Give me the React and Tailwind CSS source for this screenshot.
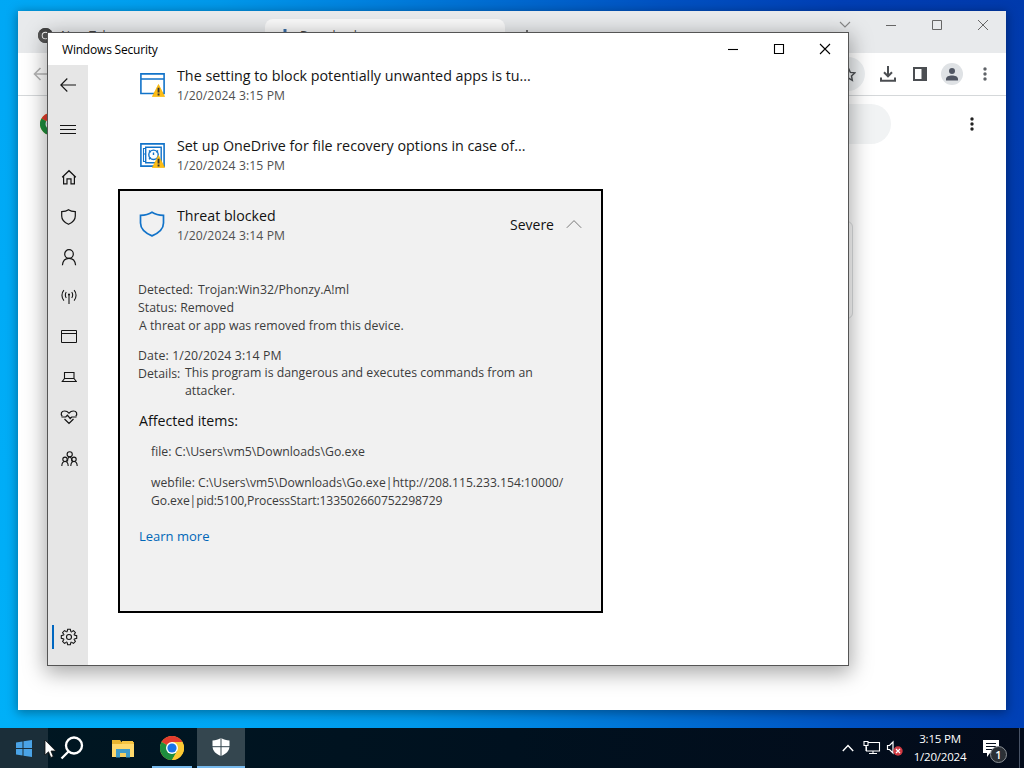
import React from "react";

const line = { fill: "none", stroke: "currentColor" };

function Svg({ w, h, className = "", children, sw = 1.1, vb }) {
  return (
    <svg width={w} height={h} viewBox={vb || `0 0 ${w} ${h}`} className={`block shrink-0 ${className}`} {...line} strokeWidth={sw}>
      {children}
    </svg>
  );
}

function NavItem({ children, className = "" }) {
  return <div className={`flex h-10 w-10 shrink-0 items-center pl-[13px] text-[#141414] ${className}`}>{children}</div>;
}

function Sidebar() {
  return (
    <nav className="flex w-10 shrink-0 flex-col bg-[#e6e6e6]">
      <NavItem>
        <Svg w={18} h={16} sw={1.1} className="-ml-[2px]"><path d="M17 8H1.800M8.300 1.500L1.800 8l6.500 6.500" /></Svg>
      </NavItem>
      <NavItem className="mt-1">
        <Svg w={18} h={12} sw={1} className="-ml-[2px]"><path d="M1 2.500h16M1 6.500h16M1 10.500h16" /></Svg>
      </NavItem>
      <NavItem className="mt-2">
        <Svg w={16} h={16} sw={1.2}><path d="M1.200 8.200L8 1.700l6.800 6.500M2.600 7v7.900h3.400v-5h4v5h3.400V7" /></Svg>
      </NavItem>
      <NavItem>
        <Svg w={15} h={16} sw={1.2}><path d="M7.500 .8C5.600 2.200 3.300 2.600.7 2.700V7c0 4 2.600 6.500 6.800 8.300C11.700 13.500 14.300 11 14.300 7V2.700C11.700 2.600 9.400 2.200 7.500 .8z" /></Svg>
      </NavItem>
      <NavItem>
        <Svg w={16} h={17} sw={1.2}><circle cx="8" cy="5" r="4.300" /><path d="M1.400 16.200C1.800 12 4.400 9.300 8 9.300s6.200 2.700 6.600 6.900" /></Svg>
      </NavItem>
      <NavItem>
        <Svg w={16} h={16}><path d="M8 5.500v9.500M5.300 3.100c-1.300 1.500-1.300 4.300 0 5.800M10.700 3.100c1.300 1.500 1.300 4.300 0 5.800M2.900 1.100c-2.600 2.900-2.600 7.600 0 10.500M13.100 1.100c2.600 2.900 2.600 7.600 0 10.500" /><circle cx="8" cy="5.500" r=".5" /></Svg>
      </NavItem>
      <NavItem>
        <Svg w={16} h={14} sw={1}><path d="M.5 .5h15v12H.5zM.5 3.500h15" /></Svg>
      </NavItem>
      <NavItem>
        <Svg w={16} h={12}><path d="M3.500 1.500h9.500v6h-9.500zM3.500 7.500L1.300 10.500h14L13 7.500" /></Svg>
      </NavItem>
      <NavItem>
        <Svg w={18} h={15} sw={1.2} className="-ml-px"><path d="M2.200 6.200C.4 4 1.200 1 4.600 1 6.800 1 8 2 9 3.200 10 2 11.200 1 13.400 1c3.400 0 4.200 3 2.400 5.200M4.500 9L9 13.500 13.500 9M1.500 7h4.300l1.600-1.900 2.800 3.400 1.500-1.500h4.800" /></Svg>
      </NavItem>
      <NavItem className="mt-[2px]">
        <Svg w={17} h={16}><circle cx="8.700" cy="3.300" r="2.600" /><circle cx="4" cy="8.300" r="2.200" /><circle cx="13" cy="8.300" r="2.200" /><path d="M.8 15c.1-2.700 1.200-4.500 3.200-4.500S7.100 12.300 7.200 15M9.800 15c.1-2.700 1.200-4.500 3.200-4.500s3.100 1.800 3.200 4.500M6.500 10.500c.2-3 .9-4.500 2.200-4.500s2 1.500 2.200 4.500" /></Svg>
      </NavItem>
      <div className="mt-auto mb-2 flex h-10 w-10 items-center text-[#141414]">
        <div className="ml-[4px] h-6 w-[2px] bg-[#0067c0]" />
        <Gear />
      </div>
    </nav>
  );
}

function Gear() {
  return (
    <svg width="18" height="18" viewBox="-9 -9 18 18" className="ml-[6px] block" {...line} strokeWidth="1.100">
      <circle r="2.500" />
      {[0, 45, 90, 135, 180, 225, 270, 315].map((a) => (
        <path key={a} transform={`rotate(${a})`} d="M-1.900 -5.500L-1.300 -7.700H1.300L1.900 -5.500Q2.400 -4.900 2.600 -5.200" />
      ))}
    </svg>
  );
}

function Warning({ className }) {
  return (
    <svg width="13" height="13" viewBox="0 0 13 13" className={className}>
      <path d="M6.500 0.500L12.600 12.600H.4z" fill="#fdbd18" stroke="#f7b500" strokeWidth=".7" strokeLinejoin="round" />
      <path d="M5.600 3.800h1.900v4.700H5.600zM5.600 9.600h1.900v1.800H5.600z" fill="#333" />
    </svg>
  );
}

function AppIcon() {
  return (
    <div className="relative h-6 w-[25px]">
      <svg width="25" height="24" viewBox="0 0 25 24" fill="none" stroke="#1273c9" strokeWidth="1.600">
        <path d="M.9 .9h23.200v19.600H.9zM1 6h23" />
      </svg>
      <Warning className="absolute top-[11px] left-[12px]" />
    </div>
  );
}

function SafeIcon() {
  return (
    <div className="relative h-6 w-[25px]">
      <svg width="25" height="24" viewBox="0 0 25 24" fill="none" stroke="#1273c9" strokeWidth="1.600">
        <path d="M.9 .9h23.200v22.200H.9z" />
        <path d="M5.700 4.200h15.500v15.600H5.700z" strokeWidth="1.400" />
        <path d="M3 5.500h2.500M3 11h2.500M3 18.500h2.500M3.500 5v14" strokeWidth="1.100" />
        <circle cx="13.500" cy="11.800" r="4.700" strokeWidth="1.400" />
        <path d="M13.500 9.500v2.500M9 7.500l1.800 1.800M18 7.500l-1.800 1.800M9 16.200l1.800-1.800" strokeWidth="1.400" />
      </svg>
      <Warning className="absolute top-[12px] left-[12px]" />
    </div>
  );
}

function Row({ icon, title, date }) {
  return (
    <div className="flex h-[70px] pl-[52px]">
      <div className="mt-[8px]">{icon}</div>
      <div className="mt-px ml-[12px]">
        <div className="h-5 text-[14.300px] leading-5 whitespace-nowrap text-[#151515]">{title}</div>
        <div className="h-5 text-[12.200px] leading-5 tracking-[0.100px] text-[#505050]">{date}</div>
      </div>
    </div>
  );
}

function ThreatCard() {
  return (
    <section className="ml-[30px] flex h-[424px] w-[485px] flex-col border-2 border-black bg-[#f1f1f1] text-[12.300px] leading-[18px] text-[#3c3c3c]">
      <div className="flex pt-[15px] pl-[19px]">
        <svg width="26" height="26" viewBox="0 0 26 26" className="mt-[5px]" fill="none" stroke="#1273c9" strokeWidth="1.700">
          <path d="M13 1.200C9.500 3.500 5.800 4.200 1.500 4.400V12c0 6.200 4.700 10 11.500 12.900C19.800 22 24.500 18.200 24.500 12V4.400C20.200 4.200 16.500 3.500 13 1.200z" />
        </svg>
        <div className="ml-[12px] w-[333px]">
          <div className="h-5 text-[14.200px] leading-5 text-[#111]">Threat blocked</div>
          <div className="h-5 text-[12.200px] leading-5 tracking-[0.100px] text-[#505050]">1/20/2024 3:14 PM</div>
        </div>
        <div className="mt-[9px] text-[14px] leading-5 text-[#111]">Severe</div>
        <Svg w={16} h={10} className="mt-[13px] ml-auto mr-[19px] text-[#777]" sw={1}><path d="M.8 8.800L8 1.600l7.200 7.200" /></Svg>
      </div>
      <div className="mt-[35px] pl-[18px]">
        <div className="flex"><span className="w-[60px]">Detected:</span><span>Trojan:Win32/Phonzy.A!ml</span></div>
        <div>Status: Removed</div>
        <div className="pl-px">A threat or app was removed from this device.</div>
        <div className="mt-3 tracking-[0.120px]">Date: 1/20/2024 3:14 PM</div>
        <div className="flex"><span className="w-[47px]">Details:</span><span className="-mt-px h-[37px] whitespace-nowrap">This program is dangerous and executes commands from an<br />attacker.</span></div>
      </div>
      <div className="mt-[10px] pl-[19px] text-[14.200px] leading-5 text-[#111]">Affected items:</div>
      <div className="mt-[12px] pl-[31px]">file: C:\Users\vm5\Downloads\Go.exe</div>
      <div className="mt-[13px] pl-[31px] text-[12.150px] whitespace-nowrap">
        <div>webfile: C:\Users\vm5\Downloads\Go.exe|http://208.115.233.154:10000/</div>
        <div className="tracking-[-0.120px]">Go.exe|pid:5100,ProcessStart:133502660752298729</div>
      </div>
      <div className="mt-[17px] pl-[19px] text-[13px] text-[#0067b8]">Learn more</div>
    </section>
  );
}

function SecurityWindow() {
  return (
    <div className="absolute top-[32px] left-[47px] flex h-[634px] w-[802px] flex-col border border-[#555] bg-white shadow-[0_5px_20px_2px_rgba(0,0,0,0.350)]">
      <header className="flex h-8 shrink-0 items-center pl-[14px] text-[12px] text-black">
        <span className="flex-1 pt-[2px] tracking-[-0.200px]">Windows Security</span>
        <div className="flex w-[138px]">
          <Svg w={46} h={32}><path d="M18 16.500h10" /></Svg>
          <Svg w={46} h={32}><path d="M18.500 11.500h9v9h-9z" /></Svg>
          <Svg w={46} h={32}><path d="M18 11l10 10M28 11L18 21" /></Svg>
        </div>
      </header>
      <div className="flex min-h-0 flex-1">
        <Sidebar />
        <main className="flex-1">
          <Row icon={<AppIcon />} title="The setting to block potentially unwanted apps is tu..." date="1/20/2024 3:15 PM" />
          <Row icon={<SafeIcon />} title="Set up OneDrive for file recovery options in case of..." date="1/20/2024 3:15 PM" />
          <div className="-mt-4"><ThreatCard /></div>
        </main>
      </div>
    </div>
  );
}

function Dots({ className = "" }) {
  return (
    <svg width="6" height="16" viewBox="0 0 6 16" fill="currentColor" className={className}>
      <circle cx="3" cy="3" r="1.700" /><circle cx="3" cy="8" r="1.700" /><circle cx="3" cy="13" r="1.700" />
    </svg>
  );
}

function ChromeLogo({ size, mono = false }) {
  const c = mono ? ["#444", "#4b4b4b", "#555", "#555"] : ["#e33b2e", "#fcc934", "#1e8e3e", "#1a73e8"];
  return (
    <svg width={size} height={size} viewBox="0 0 24 24" className="block shrink-0">
      <circle cx="12" cy="12" r="12" fill={c[1]} />
      <path d="M12 12L1.600 6A12 12 0 0 1 22.400 6H12z" fill={c[0]} />
      <path d="M1.600 6A12 12 0 0 0 12 24L17.200 15 12 12z" fill={c[2]} />
      <path d="M12 6h10.400A12 12 0 0 1 12 24l5.200-9z" fill={c[1]} />
      <circle cx="12" cy="12" r="6" fill="#fff" />
      <circle cx="12" cy="12" r="4.600" fill={c[3]} />
    </svg>
  );
}

function BrowserWindow() {
  return (
    <div className="absolute top-[11px] left-[18px] flex h-[699px] w-[988px] flex-col bg-white shadow-[0_2px_10px_1px_rgba(0,0,0,0.350)]">
      <div className="flex h-[42px] shrink-0 bg-[#e8eaec] text-[12px] text-[#444]">
        <div className="flex w-[247px] pt-[17px] pl-[20px]"><ChromeLogo size={15} mono /><span className="ml-[8px] leading-4">New Tab</span></div>
        <div className="mt-2 flex w-[240px] rounded-t-lg bg-[#fafafa] pt-[9px] pl-[14px]">
          <svg width="12" height="14" viewBox="0 0 12 14" fill="#3a6ea8"><path d="M4.500 1h3v6h4l-5.500 6-5.500-6h4z" /></svg>
          <span className="ml-[9px] leading-4">Downloads</span>
        </div>
        <div className="w-[317px] pt-[19px] pl-[16px]"><Svg w={12} h={12} sw={1.500}><path d="M6 0v12M0 6h12" /></Svg></div>
        <div className="flex h-[28px] items-center text-[#666]">
          <Svg w={46} h={28} className="text-[#888]"><path d="M18 11l5 5 5-5" /></Svg>
          <Svg w={46} h={28} sw={1}><path d="M18 14.500h10" /></Svg>
          <Svg w={46} h={28} sw={1}><path d="M18.500 9.500h9v9h-9z" /></Svg>
          <Svg w={46} h={28} sw={1}><path d="M18 9l10 10M28 9L18 19" /></Svg>
        </div>
      </div>
      <div className="flex h-[43px] shrink-0 items-center border-b border-[#d5d8da] pl-[15px] text-[#4b4e52]">
        <Svg w={16} h={14} sw={1.600} className="text-[#b5b5b5]"><path d="M15 7H1.500M7.500 1l-6 6 6 6" /></Svg>
        <div className="ml-[100px] flex h-[34px] w-[716px] items-center justify-end rounded-full bg-[#eceff1] pr-[9px]">
          <Svg w={15} h={15} sw={1.500} vb="0 0 16 16"><path d="M8 1.500l2 4.300 4.600.5-3.400 3.200.9 4.700L8 11.900l-4.100 2.300.9-4.700L1.400 6.300 6 5.800z" /></Svg>
        </div>
        <Svg w={16} h={16} sw={2} className="ml-[15px]"><path d="M8 0v10M4 6.300l4 4 4-4M1 11.500v3.300h14v-3.300" /></Svg>
        <svg width="14" height="14" viewBox="0 0 14 14" className="ml-[17px]"><path d="M0 0h14v14H0zM2 2v10h6.500V2z" fill="currentColor" fillRule="evenodd" /></svg>
        <div className="ml-[14px] flex size-[22px] items-center justify-center rounded-full bg-[#dfe2e5]">
          <svg width="12" height="13" viewBox="0 0 12 13" fill="#505562"><circle cx="6" cy="3" r="3" /><path d="M0 12.500V11c0-2.500 3-3.500 6-3.500s6 1 6 3.500v1.500z" /></svg>
        </div>
        <Dots className="ml-[19px] text-[#5f6368]" />
      </div>
      <div className="flex shrink-0 items-start pl-[22px]">
        <div className="mt-[17px]"><ChromeLogo size={22} /></div>
        <div className="mt-[8px] ml-[190px] h-[40px] w-[639px] rounded-full bg-[#f1f3f4]" />
        <Dots className="mt-[20px] ml-[78px] text-[#222]" />
      </div>
      <div className="mt-[77px] ml-[155px] h-[98px] w-[680px] rounded-md border border-[#dcdedf]" />
    </div>
  );
}

function Taskbar() {
  return (
    <footer className="flex h-10 w-full shrink-0 bg-linear-to-r from-[#001722] via-[#00111f] to-[#030b1a] text-white">
      <div className="flex w-12 items-center justify-center bg-[#1b2e39]">
        <svg width="16" height="17" viewBox="0 0 16 17" fill="#4aa3e6"><path d="M0 2.400l6.500-.9V8H0zM7.500 1.300L16 0v8H7.500zM0 9h6.500v6.500L0 14.600zM7.500 9H16v8l-8.500-1.200z" /></svg>
      </div>
      <div className="flex w-[48px] items-center justify-center">
        <Svg w={24} h={24} sw={2.300}><circle cx="14" cy="9.500" r="8" /><path d="M8.500 15.500L1.500 22.500" /></Svg>
      </div>
      <div className="flex w-[52px] items-center justify-center pl-[2px]">
        <svg width="22" height="19" viewBox="0 0 22 19"><path d="M0 1h8l1.500 2H22v15H0z" fill="#e9b530" /><path d="M0 5h22v13H0z" fill="#ffd96c" /><path d="M10 2h11v3H10z" fill="#f6c443" /><path d="M4 10h14v8.500h-4V14H8v4.500H4z" fill="#3f9bc9" /><path d="M8 14h6v4H8z" fill="#f4cf62" /></svg>
      </div>
      <div className="mr-px flex w-[48px] flex-col items-center">
        <div className="flex h-[38px] items-center pt-[2px]"><ChromeLogo size={24} /></div>
        <div className="h-[2px] w-10 bg-[#76b9ed]" />
      </div>
      <div className="flex w-12 flex-col items-center bg-[#34464f]">
        <div className="flex h-[38px] items-center">
          <svg width="18" height="18" viewBox="0 0 18 18"><path d="M9 0C6.500 1.700 3.500 2.400.5 2.500V8c0 5 3.500 8 8.500 10 5-2 8.500-5 8.500-10V2.500C14.500 2.400 11.500 1.700 9 0z" fill="#fff" /><path d="M9 0v18M0 8.700h18" stroke="#34464f" strokeWidth="1" /></svg>
        </div>
        <div className="h-[2px] w-12 bg-[#76b9ed]" />
      </div>
      <div className="ml-auto flex items-center">
        <Svg w={12} h={8} sw={1.400}><path d="M.8 7L6 1.500 11.200 7" /></Svg>
        <Svg w={18} h={16} className="ml-[9px]"><path d="M4.500 2.500h12v8.500H3.500v-4.500M1 1.500h4v4H1zM3 5.500v5.500M10 11v2.500M6 13.500h8" /></Svg>
        <div className="relative ml-[5px] h-4 w-[18px]">
          <Svg w={18} h={16} sw={1.200}><path d="M1.500 5.500h2L7 2v11l-3.500-3.500h-2z" /></Svg>
          <svg width="10" height="10" viewBox="0 0 10 10" className="absolute top-[6px] left-[7px]"><circle cx="5" cy="5" r="4.700" fill="#d13a42" /><path d="M3 3l4 4M7 3L3 7" stroke="#fff" strokeWidth="1.200" /></svg>
        </div>
        <div className="ml-[7px] w-[58px] -mt-px text-center text-[11.500px] leading-[18px] tracking-[-0.200px] whitespace-nowrap"><div>3:15 PM</div><div>1/20/2024</div></div>
        <div className="relative ml-[12px] h-10 w-[30px]">
          <svg width="18" height="18" viewBox="0 0 18 18" className="mt-[12px] ml-[2px] block"><path d="M0 0h16v13H7l-3 4v-4H0z" fill="#fff" /><path d="M3 3.500h10M3 6.500h10M3 9.500h7" stroke="#06101f" /></svg>
          <div className="absolute top-[18px] left-[9px] flex size-[17px] items-center justify-center rounded-full border border-[#8b9096] bg-[#2b3036] text-[11px] leading-none font-semibold">1</div>
        </div>
        <div className="ml-[8px] h-10 w-px bg-[#485366]" />
        <div className="w-1" />
      </div>
    </footer>
  );
}

export default function App() {
  return (
    <div className="relative flex h-[768px] w-[1024px] flex-col overflow-hidden bg-[#0078d7] font-['Open_Sans','Noto_Sans',sans-serif]">
      <div className="flex-1 bg-[linear-gradient(75deg,#00b0f8_0%,#00a6f4_20%,#0098ea_34%,#0083e0_45%,#006fd3_55%,#0052c2_70%,#003fb5_85%,#003aac_100%)]" />
      <Taskbar />
      <BrowserWindow />
      <SecurityWindow />
      <svg width="13" height="20" viewBox="0 0 13 20" className="absolute top-[739px] left-[44px]">
        <path d="M1 1v15l3.500-3.200 2.300 5.700 2.500-1-2.300-5.500h4.800z" fill="#fff" stroke="#111" strokeWidth=".8" />
      </svg>
    </div>
  );
}
